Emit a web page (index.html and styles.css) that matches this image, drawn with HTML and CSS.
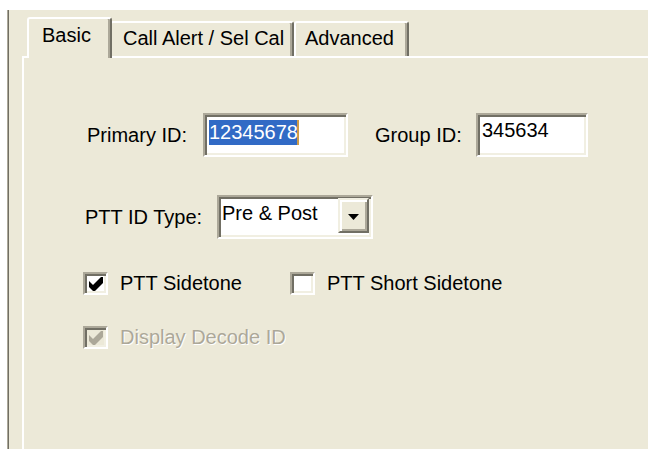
FILE: index.html
```html
<!DOCTYPE html>
<html>
<head>
<meta charset="utf-8">
<title>Basic</title>
<link rel="stylesheet" href="styles.css">
</head>
<body>
<div class="dialog">
  <div class="tabs">
    <div class="tab tab-basic active">Basic</div>
    <div class="tab tab-call">Call Alert / Sel Cal</div>
    <div class="tab tab-adv">Advanced</div>
  </div>
  <div class="page">
    <div class="row row-ids">
      <span class="lbl lbl-primary">Primary ID:</span>
      <div class="edit edit-primary"><span class="sel">12345678</span></div>
      <span class="lbl lbl-group">Group ID:</span>
      <div class="edit edit-group">345634</div>
    </div>
    <div class="row row-type">
      <span class="lbl lbl-type">PTT ID Type:</span>
      <div class="combo">
        <span class="combo-text">Pre &amp; Post</span>
        <span class="combo-btn">
          <svg width="11" height="6" viewBox="0 0 11 6"><path d="M0 0H11L5.5 6Z" fill="#000"/></svg>
        </span>
      </div>
    </div>
    <div class="row row-checks">
      <div class="check check-first">
        <span class="box">
          <svg width="14" height="14" viewBox="0 0 7 7"><path d="M0 2L2 4L6 0H7V3L3 7H2L0 5Z" fill="#000"/></svg>
        </span>
        <span>PTT Sidetone</span>
      </div>
      <div class="check">
        <span class="box"></span>
        <span>PTT Short Sidetone</span>
      </div>
    </div>
    <div class="row row-display">
      <div class="check disabled">
        <span class="box">
          <svg width="14" height="14" viewBox="0 0 7 7"><path d="M0 2L2 4L6 0H7V3L3 7H2L0 5Z" fill="#ACA899"/></svg>
        </span>
        <span>Display Decode ID</span>
      </div>
    </div>
  </div>
</div>
</body>
</html>
```
FILE: styles.css
```css
html, body {
  margin: 0;
  height: 100%;
  overflow: hidden;
  background: #fff;
}

body {
  font-family: "Liberation Sans", Arial, sans-serif;
  font-size: 20px;
  color: #000;
}

/* dialog client area with its sunken left frame */
.dialog {
  box-sizing: border-box;
  margin: 10px 0 0 7px;
  height: 439px;
  background: #ECE9D8;
  border-left: 1px solid #ACA899;
  box-shadow: inset 1px 0 0 #716F64;
  padding: 7px 0 0 14px;
  display: flex;
  flex-direction: column;
}

/* tab strip */
.tabs {
  display: flex;
  align-items: flex-end;
  height: 39px;
  padding-left: 5px;
  position: relative;
  z-index: 1;
}

.tab {
  box-sizing: border-box;
  height: 35px;
  border: 2px solid #fff;
  border-bottom: 0;
  border-right-color: #716F64;
  border-radius: 3px 3px 0 0;
  box-shadow: inset -2px 0 0 #ACA899;
  background: #ECE9D8;
  line-height: 23px;
  padding-top: 4px;
  white-space: nowrap;
}

.tab.active {
  height: 41px;
  margin-bottom: -2px;
  padding-top: 5px;
  position: relative;
  z-index: 2;
}

.tab-basic {
  width: 85px;
  padding-left: 13px;
}

.tab-call {
  width: 184px;
  margin-left: -2px;
  padding-left: 11px;
}

.tab-adv {
  width: 115px;
  padding-left: 9px;
}

/* tab page */
.page {
  flex: 1;
  border-top: 2px solid #fff;
  border-left: 2px solid #fff;
  padding: 55px 0 0 59px;
  display: flex;
  flex-direction: column;
}

.row {
  display: flex;
  align-items: center;
}

.lbl {
  white-space: nowrap;
}

.lbl-primary {
  margin-left: 4px;
  width: 116px;
}

.lbl-group {
  width: 101px;
}

.lbl-type {
  margin-left: 2px;
  width: 132px;
}

/* sunken edit fields */
.edit,
.combo {
  box-sizing: border-box;
  height: 44px;
  border: 2px solid;
  border-color: #ACA899 #fff #fff #ACA899;
  box-shadow: inset 2px 2px 0 #716F64, inset -2px -2px 0 #F1EFE2;
  background: #fff;
}

.edit {
  padding: 5px 0 0 4px;
  line-height: 25px;
  white-space: nowrap;
}

.edit-primary {
  width: 145px;
  margin-right: 27px;
}

.edit-group {
  width: 112px;
  padding-top: 3px;
}

.sel {
  display: inline-block;
  background: #316AC5;
  color: #fff;
  height: 25px;
  padding-right: 1px;
  box-shadow: inset -2px 0 0 #CE9A45;
}

/* drop-down list */
.row-type {
  margin-top: 38px;
}

.combo {
  width: 156px;
  display: flex;
  align-items: flex-start;
}

.combo-text {
  flex: 1;
  padding: 5px 0 0 3px;
  line-height: 23px;
  white-space: nowrap;
}

.combo-btn {
  box-sizing: border-box;
  width: 31px;
  height: 35px;
  margin: 1px 2px 0 0;
  border: 2px solid;
  border-color: #F1EFE2 #716F64 #716F64 #F1EFE2;
  box-shadow: inset 2px 2px 0 #fff, inset -2px -2px 0 #ACA899;
  background: #ECE9D8;
  display: flex;
  align-items: center;
  justify-content: center;
  padding-top: 2px;
}

.combo-btn svg {
  display: block;
}

/* check boxes */
.row-checks {
  margin-top: 33px;
}

.row-display {
  margin-top: 31px;
}

.check {
  display: flex;
  align-items: center;
  white-space: nowrap;
}

.check-first {
  width: 207px;
}

.box {
  box-sizing: border-box;
  width: 25px;
  height: 23px;
  margin-right: 12px;
  border: 2px solid;
  border-color: #ACA899 #fff #fff #ACA899;
  box-shadow: inset 2px 2px 0 #716F64, inset -2px -2px 0 #F1EFE2;
  background: #fff;
  display: flex;
  align-items: center;
  justify-content: center;
}

.box svg {
  display: block;
}

.check.disabled {
  color: #ACA899;
  text-shadow: 1px 1px 0 #fff;
}

.check.disabled .box {
  background: #ECE9D8;
}
```
